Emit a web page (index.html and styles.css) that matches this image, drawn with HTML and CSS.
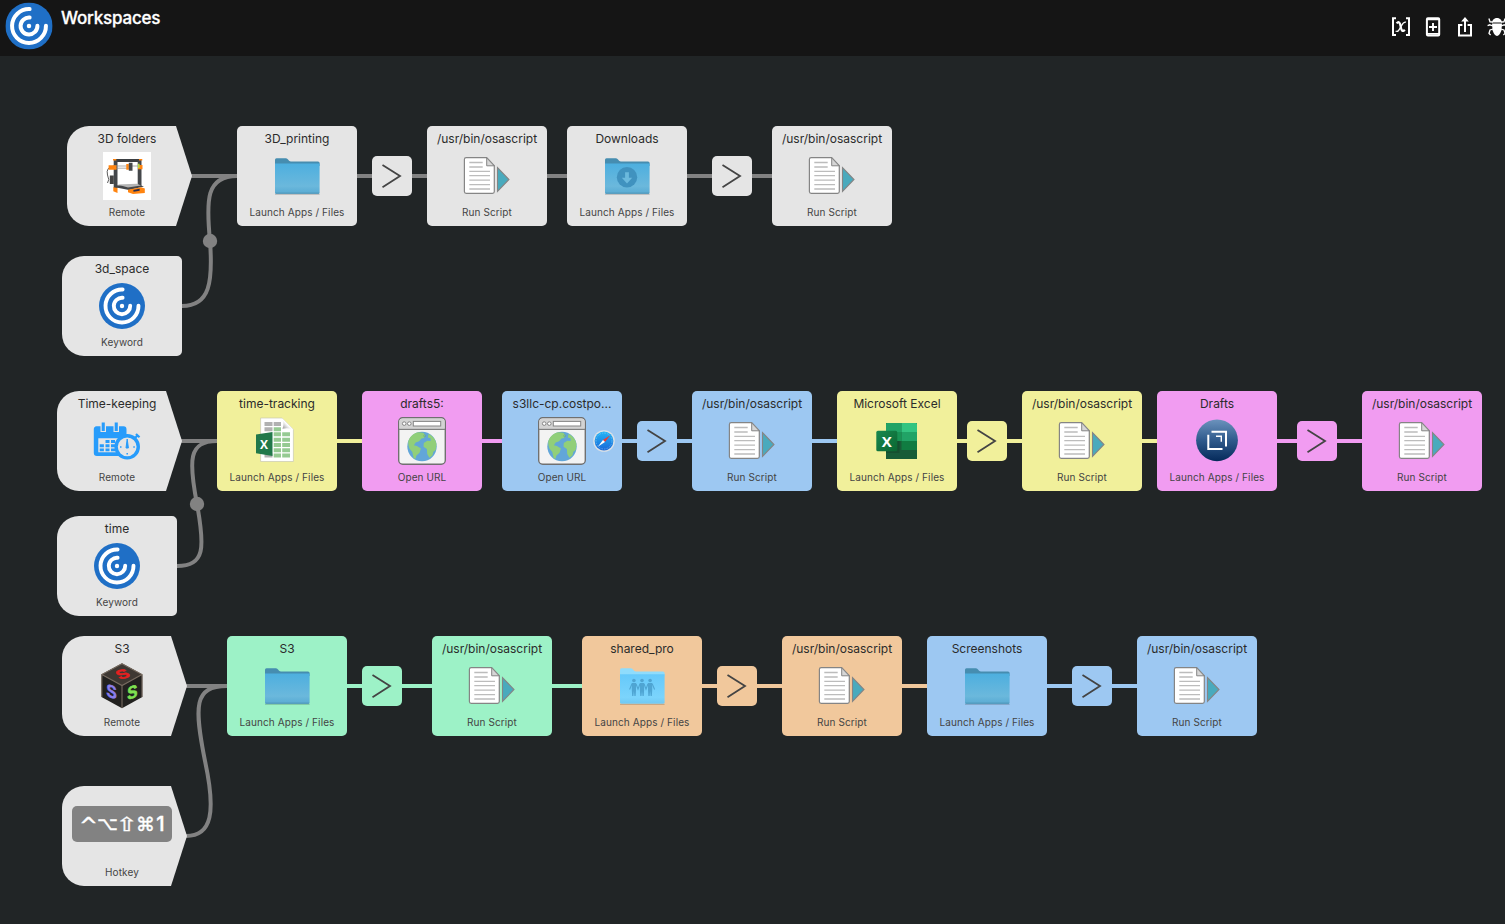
FILE: index.html
```html
<!DOCTYPE html>
<html lang="en">
<head>
<meta charset="utf-8">
<title>Workspaces</title>
<link rel="stylesheet" href="styles.css">
</head>
<body>
<svg class="defs" aria-hidden="true">
  <defs>
    <linearGradient id="g-folder" x1="0" y1="0" x2="0" y2="1"><stop offset="0" stop-color="#4dafdf"/><stop offset=".75" stop-color="#6bb8dc"/><stop offset=".85" stop-color="#62b2d8"/><stop offset="1" stop-color="#5cabd2"/></linearGradient>
    <linearGradient id="g-light" x1="0" y1="0" x2="0" y2="1"><stop offset="0" stop-color="#66c9fa"/><stop offset=".78" stop-color="#7bd4fc"/><stop offset="1" stop-color="#70c8f2"/></linearGradient>
    <linearGradient id="g-drafts" x1="0" y1="0" x2="0" y2="1"><stop offset="0" stop-color="#6c93bd"/><stop offset=".5" stop-color="#2f5a8c"/><stop offset="1" stop-color="#052a5a"/></linearGradient>
    <linearGradient id="g-xl" x1="0" y1="0" x2="1" y2="1"><stop offset="0" stop-color="#18884f"/><stop offset="1" stop-color="#0b6631"/></linearGradient>
    <linearGradient id="g-fold" x1="0" y1="1" x2="1" y2="0"><stop offset="0" stop-color="#888"/><stop offset=".45" stop-color="#fff"/><stop offset="1" stop-color="#ddd"/></linearGradient>
    <linearGradient id="g-safari" x1="0" y1="0" x2="0" y2="1"><stop offset="0" stop-color="#25b5f5"/><stop offset="1" stop-color="#1767d8"/></linearGradient>
  </defs>
  <symbol id="logo" viewBox="0 0 46 46">
    <circle cx="23" cy="23" r="23" fill="#1f6fc6"/>
    <g fill="none" stroke="#fff" stroke-width="3.9" stroke-linecap="round">
      <path d="M23.6 6.5A16.5 16.5 0 1 0 39.5 22.8"/>
      <path d="M23.6 14.8A8.2 8.2 0 1 0 31.2 22.8"/>
    </g>
    <circle cx="23" cy="23" r="2.2" fill="#fff"/>
  </symbol>
  <symbol id="script" viewBox="0 0 48 48">
    <path d="M3.2 5.7H23.7L31.3 13.8V39.6a1.8 1.8 0 0 1-1.8 1.8H3.2a1.8 1.8 0 0 1-1.8-1.8V7.5a1.8 1.8 0 0 1 1.8-1.8Z" fill="#fff" stroke="#858585" stroke-width="1.2"/>
    <path d="M23.7 5.9V13.8H31.2Z" fill="#d6d6d6" stroke="#858585"/>
    <path d="M6.3 10.5H19.7M6.3 15H19.7M6.3 19.3H27M6.3 23.7H27M6.3 28.2H27M6.3 32.6H27M6.3 37H27" stroke="#bcbcbc" stroke-width="1.3"/>
    <path d="M34.5 15.6V39.5L46 27.5Z" fill="#49aabd" stroke="#858585" stroke-width="1.1"/>
  </symbol>
  <symbol id="folder" viewBox="0 0 48 48">
    <path d="M2 42.4H46.6" stroke="#000" stroke-opacity=".18"/>
    <path d="M2 12V7.8a1.5 1.5 0 0 1 1.5-1.5H13c1.8 0 2.8 3.2 4.8 3.2H45a1.6 1.6 0 0 1 1.6 1.6V14H2Z" fill="#468db0"/>
    <path d="M2 11.6H46.6V40.4a1.4 1.4 0 0 1-1.4 1.4H3.4A1.4 1.4 0 0 1 2 40.4Z" fill="url(#g-folder)"/>
    <path d="M2.5 41.2H46.1" stroke="#4c93b5"/>
  </symbol>
  <symbol id="shared" viewBox="0 0 48 48">
    <path d="M2 42.4H46.6" stroke="#000" stroke-opacity=".18"/>
    <path d="M2 12V7.8a1.5 1.5 0 0 1 1.5-1.5H13c1.8 0 2.8 3.2 4.8 3.2H45a1.6 1.6 0 0 1 1.6 1.6V14H2Z" fill="#8fdcfc"/>
    <path d="M2 12.2H46.6V40.4a1.4 1.4 0 0 1-1.4 1.4H3.4A1.4 1.4 0 0 1 2 40.4Z" fill="url(#g-light)"/>
    <g fill="#4fa5d3"><circle cx="15.9" cy="18.5" r="1.8"/><circle cx="24" cy="18.5" r="1.8"/><circle cx="32.1" cy="18.5" r="1.8"/>
    <path d="M13.8 21h4.2v7.5l-.4 5.5h-1.2l-.5-5-.5 5h-1.2l-.4-5.5ZM21.900 21h4.2v7.5l-.4 5.5h-1.2l-.5-5-.5 5h-1.2l-.4-5.500ZM30 21h4.200v7.500l-.4 5.500h-1.200l-.5-5-.5 5h-1.200l-.4-5.500Z"/></g>
    <path d="M14 21.8L11.6 27.5M18 21.8L20 27.2L22 21.8M26 21.8L28 27.2L30 21.8M34.2 21.8L36.6 27.5" fill="none" stroke="#4fa5d3" stroke-width="1.1"/>
  </symbol>
  <symbol id="browser" viewBox="0 0 48 48">
    <rect x=".7" y=".7" width="46.6" height="46.6" rx="4" fill="#f3f3f3" stroke="#707070" stroke-width="1.4"/>
    <path d="M1.4 11.8V4.7A3.3 3.3 0 0 1 4.7 1.4H43.3a3.3 3.3 0 0 1 3.3 3.3V11.8Z" fill="#d3d3d3"/>
    <path d="M1 12.3H47" stroke="#808080" stroke-width="1.2"/>
    <g fill="#fff" stroke="#858585"><circle cx="6.2" cy="6.6" r="1.8"/><circle cx="11.3" cy="6.6" r="1.8"/><rect x="15.3" y="4.4" width="27.4" height="4.6"/></g>
    <circle cx="24" cy="29.5" r="14.7" fill="#62a6d8"/>
    <path d="M10.2 25c1-5 5-8.6 10-9.800l5 .6 2.300 2.400-1.400 2.800-2.600.600-2.400 2.600-3.400 1.400-1.800 2.600 3 .800 4 2.600-1.300 4.200-3.200 2.800-.9 3.200-1.800-.6-1.400-6.200-2.900-3.600-.9-3.200Z" fill="#91cf79"/>
    <path d="M30.5 17c4.6 2 7.4 5.8 8 10.3l-.8 5.8-2.300 1.700-1 3.600-3 2.400-2.200-3.800-.3-5-3.400-2.200.3-3.700 3.500-2.400 3.400.2-.2-2.600-2.600-.8Z" fill="#91cf79"/>
    <circle cx="26.7" cy="18.8" r="1" fill="#91cf79" stroke="#4c91aa" stroke-width=".5"/>
  </symbol>
  <symbol id="chevron" viewBox="0 0 40 40"><path d="M10.500 9L28 20L10.500 31.200" fill="none" stroke="#444" stroke-width="1.8"/></symbol>
</svg>

<header class="topbar">
  <svg class="topbar-logo"><use href="#logo"/></svg>
  <h1 class="topbar-title">Workspaces</h1>
  <nav class="tools">
    <svg class="tool" viewBox="0 0 24 24"><path d="M7 3.3H4V20H7M17 3.3H20V20H17" fill="none" stroke="#fff" stroke-width="2"/><path d="M7.600 8.400C9.500 6 10.800 7 11.600 11.200C12.400 15.600 13.600 17.400 15.800 14.800" fill="none" stroke="#fff" stroke-width="2.200"/><path d="M17 7.200C14.500 6.400 13.400 9 11.800 11.800C10.200 14.800 9 17.400 6.600 16" fill="none" stroke="#fff" stroke-width="1.400"/></svg>
    <svg class="tool" viewBox="0 0 24 24"><rect x="5.900" y="3.200" width="12.300" height="17.200" rx="1" fill="none" stroke="#fff" stroke-width="2"/><path d="M6 18.900H18M6 4.400H18M12 8V16M8 12H16" stroke="#fff" stroke-width="1.900"/></svg>
    <svg class="tool" viewBox="0 0 24 24"><path d="M9.400 10H6V20.400H18V10H14.600M12 17V5" fill="none" stroke="#fff" stroke-width="2"/><path d="M12 2L15.800 6.600H8.200Z" fill="#fff"/></svg>
    <svg class="tool" viewBox="0 0 24 24"><g fill="#fff"><path d="M7.300 7.600C7 1.600 17 1.600 16.700 7.600Z"/><path d="M7 8.500H17L16.400 15.500Q14.600 20.600 12 21Q9.400 20.600 7.600 15.500Z"/></g><path d="M8 7L5 6.800L3.900 3.500M16 7L19 6.800L20.100 3.500M8 11L4.800 9.800L2.600 10.700M16 11L19.200 9.800L21.400 10.700M8.300 14L5 15L4 18.400L5.600 20M15.700 14L19 15L20 18.400L18.400 20" fill="none" stroke="#fff" stroke-width="1.300"/></svg>
  </nav>
</header>

<main class="canvas">
  <svg class="wires" viewBox="0 56 1505 868">
    <g class="wire gray">
      <path d="M191 176H237M357 176H427M547 176H567M687 176H772"/>
      <path d="M182 306C210 306 213 282 210 241C206 200 206 176 237 176"/>
      <path d="M181 441H217M177 566C205 566 205 548 197 504C188.500 460 188.500 441 217 441"/>
      <path d="M186 686H227M186 836C212 836 216 812 205 761C194 706 194 686 227 686"/>
    </g>
    <path class="wire yellow" d="M337 441H362M957 441H1022M1142 441H1157"/>
    <path class="wire pink" d="M482 441H502M1277 441H1362"/>
    <path class="wire blue" d="M622 441H692M812 441H837M1047 686H1137"/>
    <path class="wire green" d="M347 686H432M552 686H582"/>
    <path class="wire orange" d="M702 686H782M902 686H927"/>
    <circle cx="210" cy="241" r="7.200" fill="#828282"/><circle cx="197" cy="504" r="7.200" fill="#828282"/>
  </svg>

  <section class="lane lane-folders">
    <div class="node remote x67"><b>3D folders</b>
      <svg class="icon" viewBox="0 0 48 48"><path d="M0 0H48V48H0Z" fill="#fff"/>
        <path d="M12 8.500H38" stroke="#3c3f42" stroke-width="3"/><path d="M12.600 8V36M36.600 8V34" stroke="#44474a" stroke-width="3.800"/>
        <path d="M11 14H36M11 16.200H26" stroke="#888" stroke-width=".7"/><path d="M11 14Q2.500 15 4.500 23Q7 28 4.500 31" fill="none" stroke="#333" stroke-width=".8"/>
        <path d="M6.800 23.500H10.800V32H6.800Z" fill="#444"/><path d="M12 33.500L35 32.500L41 34.500L26 38L12 35.200Z" fill="#444649"/><path d="M14.500 32.600L34 31.700L38 33.500L25 35.500Z" fill="#b5b5b5"/>
        <path d="M10 6.900H13.300V8.500H10ZM36 6.900H39.300V8.500H36ZM5.600 13.200H13.500V17.700H5.600ZM23.300 12H25.800V17.800H23.300ZM35 13H39.500V17.200H35ZM10.300 35.200L14.500 36V41L10.300 39.200ZM25 37.800L38 35.200L41.800 36.500V41L30 42L25 40.300Z" fill="#ff8410"/><path d="M25.800 10.800H29.500V18.800H25.800Z" fill="#45484b"/><path d="M34.900 11.700H36.600V16H34.900Z" fill="#b7da43"/><path d="M30.300 37.900L36.600 36.800V38.800L30.600 39.800Z" fill="#262d52"/></svg>
      <small>Remote</small></div>
    <div class="node x237"><b>3D_printing</b><svg class="icon"><use href="#folder"/></svg><small>Launch Apps / Files</small></div>
    <svg class="step x372"><use href="#chevron"/></svg>
    <div class="node x427"><b>/usr/bin/osascript</b><svg class="icon"><use href="#script"/></svg><small>Run Script</small></div>
    <div class="node x567"><b>Downloads</b><svg class="icon" viewBox="0 0 48 48"><use href="#folder"/><circle cx="24" cy="25.200" r="10.200" fill="#4092bf"/><path d="M22.100 20.200H25.900V25.800H29.200L24 31.400L18.800 25.800H22.100Z" fill="#6bb9dd"/></svg><small>Launch Apps / Files</small></div>
    <svg class="step x712"><use href="#chevron"/></svg>
    <div class="node x772"><b>/usr/bin/osascript</b><svg class="icon"><use href="#script"/></svg><small>Run Script</small></div>
  </section>
  <section class="lane lane-folders-key">
    <div class="node keyword x62"><b>3d_space</b><svg class="icon icon-logo"><use href="#logo"/></svg><small>Keyword</small></div>
  </section>

  <section class="lane lane-time">
    <div class="node remote x57"><b>Time-keeping</b>
      <svg class="icon" viewBox="0 0 48 48"><path d="M3.500 9.300H7.500V15H13V9.300H20.500V15H26V9.300H30.500A3 3 0 0 1 33.500 12.300V39H3.800A3 3 0 0 1 .8 36V12.300A3 3 0 0 1 3.500 9.300Z" fill="#279cfb"/><path d="M8.700 5.500H11.800V14H8.700ZM21.700 5.500H24.800V14H21.700Z" fill="#279cfb"/><path d="M5.300 21.300H26V35.300H5.300Z" fill="#e5e5e5"/><path d="M12.500 23H16.500V26H12.500ZM18 23H22V26H18ZM6.700 27.300H10.900V30.200H6.700ZM12.500 27.300H16.500V30.200H12.500ZM18 27.300H22V30.200H18ZM6.700 31.500H10.900V34.300H6.700ZM12.500 31.500H16.500V34.300H12.500ZM18 31.500H22V34.300H18Z" fill="#279cfb"/><path d="M42 21L44.500 18.500M43 17L46.500 20.300" stroke="#279cfb" stroke-width="2.200"/><circle cx="34.200" cy="29.800" r="11.100" fill="#e5e5e5" stroke="#279cfb" stroke-width="3.400"/><path d="M33 31L34.200 22L35.400 31Z" stroke="#279cfb" fill="#279cfb"/><path d="M27 30H28.500M40.300 30H41.800M34.200 36V37.500" stroke="#279cfb" stroke-width="1.500"/></svg>
      <small>Remote</small></div>
    <div class="node yellow x217"><b>time-tracking</b>
      <svg class="icon" viewBox="0 0 48 48"><path d="M7.600 1H29L40.400 12.500V44.500H7.600Z" fill="#fff" stroke="#c9c9b0" stroke-width=".700"/><path d="M11.500 5H19.500V9H11.500ZM20.700 5H28V9H20.700ZM11.500 10.200H19.500V14.200H11.500Z" fill="#b1b1b1"/><path d="M20.700 10.200H28V14.200H20.700ZM20.700 15.300H28V19.300H20.700ZM29.200 15.300H37V19.300H29.200ZM20.700 20.800H28V24.800H20.700ZM29.200 20.800H37V24.800H29.200ZM20.700 26H28V30H20.700ZM29.200 26H37V30H29.200ZM20.700 31.300H28V35.300H20.700ZM29.200 31.300H37V35.300H29.200ZM20.700 36.500H28V40.500H20.700ZM29.200 36.500H37V40.500H29.200Z" fill="#95ca92"/><path d="M11.500 36.500H19.500V40.500H11.500Z" fill="#b1b1b1"/><path d="M29 1Q31.500 7 29.500 11.800Q35 10.500 40.400 12.500Z" fill="url(#g-fold)"/><path d="M3 17.500L19.500 15V39L3 36.200Z" fill="#21784a"/><text x="11" y="31.800" text-anchor="middle" class="xl-old">X</text></svg>
      <small>Launch Apps / Files</small></div>
    <div class="node pink x362"><b>drafts5:</b><svg class="icon"><use href="#browser"/></svg><small>Open URL</small></div>
    <div class="node blue x502"><b>s3llc-cp.costpo...</b><svg class="icon"><use href="#browser"/></svg><small>Open URL</small>
      <svg class="badge" viewBox="0 0 22 22"><circle cx="11" cy="11" r="10.800" fill="#dce1e6"/><circle cx="11" cy="11" r="9.400" fill="url(#g-safari)"/><circle cx="11" cy="11" r="8" fill="none" stroke="#b9e3fb" stroke-width="1" stroke-dasharray=".4 1.300"/><path d="M17.200 5.200L10 10L12 12Z" fill="#f13a30"/><path d="M4.800 16.800L10 10L12 12Z" fill="#fff"/></svg></div>
    <svg class="step blue x637"><use href="#chevron"/></svg>
    <div class="node blue x692"><b>/usr/bin/osascript</b><svg class="icon"><use href="#script"/></svg><small>Run Script</small></div>
    <div class="node yellow x837"><b>Microsoft Excel</b>
      <svg class="icon" viewBox="0 0 48 48"><path d="M13 6H44V42H13Z" fill="#185c37"/><path d="M13 7A1 1 0 0 1 14 6H28.500V15H13Z" fill="#21a366"/><path d="M28.500 6H43A1 1 0 0 1 44 7V15H28.500Z" fill="#33c481"/><path d="M13 15H28.500V24H13Z" fill="#189354"/><path d="M28.500 15H44V24H28.500Z" fill="#21a366"/><path d="M28.500 24H44V33H28.500Z" fill="#107c41"/><path d="M13 24H26.500V36H13Z" fill="#154f30"/><rect x="3.300" y="13.800" width="21" height="20.500" rx="1.600" fill="url(#g-xl)"/><text x="13.800" y="29.900" text-anchor="middle" class="xl-new">X</text></svg>
      <small>Launch Apps / Files</small></div>
    <svg class="step yellow x967"><use href="#chevron"/></svg>
    <div class="node yellow x1022"><b>/usr/bin/osascript</b><svg class="icon"><use href="#script"/></svg><small>Run Script</small></div>
    <div class="node pink x1157"><b>Drafts</b>
      <svg class="icon" viewBox="0 0 48 48"><circle cx="24" cy="23.300" r="20.900" fill="url(#g-drafts)"/><g fill="none" stroke="#fff" stroke-width="2"><path d="M18.500 14.800H33V29.500"/><path d="M15.300 17.700V32H29.500"/><path d="M23 19.300H28.300V24.700" stroke-width="1.400"/></g></svg>
      <small>Launch Apps / Files</small></div>
    <svg class="step pink x1297"><use href="#chevron"/></svg>
    <div class="node pink x1362"><b>/usr/bin/osascript</b><svg class="icon"><use href="#script"/></svg><small>Run Script</small></div>
  </section>
  <section class="lane lane-time-key">
    <div class="node keyword x57"><b>time</b><svg class="icon icon-logo"><use href="#logo"/></svg><small>Keyword</small></div>
  </section>

  <section class="lane lane-s3">
    <div class="node remote x62"><b>S3</b>
      <svg class="icon" viewBox="0 0 48 48"><path d="M24 1.500L44.300 12.500V35L24 46.300L3.500 35V12.500Z" fill="#22211f"/><path d="M24 1.500L44.300 12.500L24 23.500L3.500 12.500Z" fill="#3e3833"/><path d="M3.800 12.500L24 23.500L44 12.500M24 23.500V46M24 1.800L3.800 12.500V35M24 1.800L44 12.500V35" fill="none" stroke="#776b60" stroke-width="1.100"/><g text-anchor="middle"><text class="cube red" transform="matrix(1 -.3 .5 .68 24.300 12)" y="6">S</text><text class="cube violet" transform="matrix(.9 .3 0 1.050 13.500 29.500)" y="6">S</text><text class="cube lime" transform="matrix(.9 -.3 0 1.050 34.300 30)" y="6">S</text></g></svg>
      <small>Remote</small></div>
    <div class="node green x227"><b>S3</b><svg class="icon"><use href="#folder"/></svg><small>Launch Apps / Files</small></div>
    <svg class="step green x362"><use href="#chevron"/></svg>
    <div class="node green x432"><b>/usr/bin/osascript</b><svg class="icon"><use href="#script"/></svg><small>Run Script</small></div>
    <div class="node orange x582"><b>shared_pro</b><svg class="icon"><use href="#shared"/></svg><small>Launch Apps / Files</small></div>
    <svg class="step orange x717"><use href="#chevron"/></svg>
    <div class="node orange x782"><b>/usr/bin/osascript</b><svg class="icon"><use href="#script"/></svg><small>Run Script</small></div>
    <div class="node blue x927"><b>Screenshots</b><svg class="icon"><use href="#folder"/></svg><small>Launch Apps / Files</small></div>
    <svg class="step blue x1072"><use href="#chevron"/></svg>
    <div class="node blue x1137"><b>/usr/bin/osascript</b><svg class="icon"><use href="#script"/></svg><small>Run Script</small></div>
  </section>
  <section class="lane lane-hotkey">
    <div class="node remote hotkey x62"><kbd class="keys"><i class="ctl">^</i><i class="opt">⌥</i><i class="shift">⇧</i><i class="cmd">⌘</i><i class="one">1</i></kbd><small>Hotkey</small></div>
  </section>
</main>
</body>
</html>
```
FILE: styles.css
```css
* { box-sizing: border-box; }
body {
  margin: 0;
  height: 924px;
  overflow: hidden;
  display: flex;
  flex-direction: column;
  background: #212526;
  font-family: Inter, "Liberation Sans", sans-serif;
}
.defs { position: absolute; width: 0; height: 0; }

/* Top bar */
.topbar {
  flex: none;
  display: flex;
  width: 1512px;
  height: 56px;
  padding: 2px 3px 0 5px;
  background: #151515;
}
.topbar-logo { width: 48px; height: 48px; padding: .4px; }
.topbar-title {
  margin: 5px 0 0 8px;
  color: #fff;
  font-size: 17px;
  font-weight: 500;
  line-height: 22px;
  letter-spacing: -.2px;
  -webkit-text-stroke: .3px #fff;
}
.tools { display: flex; gap: 8px; margin: 13px 0 0 auto; }
.tool { width: 24px; height: 24px; }

/* Workflow canvas */
.canvas { position: relative; flex: 1; overflow: hidden; }
.wires { display: block; width: 1505px; height: 868px; }
.wire { fill: none; stroke-width: 4; stroke: var(--tint); }
.lane { position: absolute; left: 0; width: 100%; height: 100px; }
.lane-folders { top: 70px; }
.lane-folders-key { top: 200px; }
.lane-time { top: 335px; }
.lane-time-key { top: 460px; }
.lane-s3 { top: 580px; }
.lane-hotkey { top: 730px; }

.gray { --tint: #828282; }
.yellow { --tint: #f1f09b; }
.pink { --tint: #f19cf1; }
.blue { --tint: #9dc8f2; }
.green { --tint: #9df2c7; }
.orange { --tint: #f1c89c; }

.node {
  position: absolute;
  top: 0;
  display: flex;
  flex-direction: column;
  align-items: center;
  width: 120px;
  height: 100px;
  padding-top: 5px;
  border-radius: 5px;
  background: var(--tint, #e5e5e5);
  color: #2b2b2b;
}
.node b { height: 21px; font-size: 12px; font-weight: 400; line-height: 16px; letter-spacing: 0; white-space: nowrap; }
.node small { margin-top: 6px; color: #444; font-size: 10px; line-height: 13px; letter-spacing: .1px; white-space: nowrap; }
.icon { flex: none; width: 48px; height: 48px; }
.icon-logo { padding: 1px; }
.keyword { border-radius: 22px 5px 5px 22px; }
.remote {
  width: 125px;
  padding-right: 5px;
  border-radius: 22px 0 0 22px;
  clip-path: polygon(0 0, 109px 0, 125px 50px, 109px 100px, 0 100px);
}
.badge { position: absolute; left: 91px; top: 39px; width: 22px; height: 22px; }
.step {
  position: absolute;
  top: 30px;
  width: 40px;
  height: 40px;
  border-radius: 5px;
  background: var(--tint, #e5e5e5);
}
.hotkey { padding-top: 20px; }
.hotkey small { margin-top: 24px; }
.keys {
  display: flex;
  align-items: center;
  width: 100px;
  height: 36px;
  padding-left: 7px;
  border-radius: 5px;
  background: #828282;
  color: #fff;
  font: 20px/36px "DejaVu Sans", sans-serif;
}
.keys i {
  display: flex;
  justify-content: center;
  flex: none;
  width: 19px;
  font-style: normal;
  -webkit-text-stroke: .4px #fff;
}
.keys .ctl { padding-top: 4px; font-size: 22px; }
.keys .opt { font-size: 18px; }
.keys .shift { transform: scale(1.35, .95); -webkit-text-stroke-width: .3px; }
.keys .cmd { font-size: 19px; }
.keys .one { width: 11px; font: 500 20px/36px Inter, sans-serif; }

.xl-old { fill: #fff; font: bold 12px "Open Sans", sans-serif; }
.xl-new { fill: #fff; font: bold 15px "Open Sans", sans-serif; }
.cube { font: bold 17px "Liberation Sans", sans-serif; stroke-width: .6; }
.cube.red { fill: #e62020; stroke: #e62020; }
.cube.violet { fill: #8b7eea; stroke: #8b7eea; }
.cube.lime { fill: #7ee052; stroke: #7ee052; }

.x57 { left: 57px; }
.x62 { left: 62px; }
.x67 { left: 67px; }
.x217 { left: 217px; }
.x227 { left: 227px; }
.x237 { left: 237px; }
.x362 { left: 362px; }
.x372 { left: 372px; }
.x427 { left: 427px; }
.x432 { left: 432px; }
.x502 { left: 502px; }
.x567 { left: 567px; }
.x582 { left: 582px; }
.x637 { left: 637px; }
.x692 { left: 692px; }
.x712 { left: 712px; }
.x717 { left: 717px; }
.x772 { left: 772px; }
.x782 { left: 782px; }
.x837 { left: 837px; }
.x927 { left: 927px; }
.x967 { left: 967px; }
.x1022 { left: 1022px; }
.x1072 { left: 1072px; }
.x1137 { left: 1137px; }
.x1157 { left: 1157px; }
.x1297 { left: 1297px; }
.x1362 { left: 1362px; }
```
